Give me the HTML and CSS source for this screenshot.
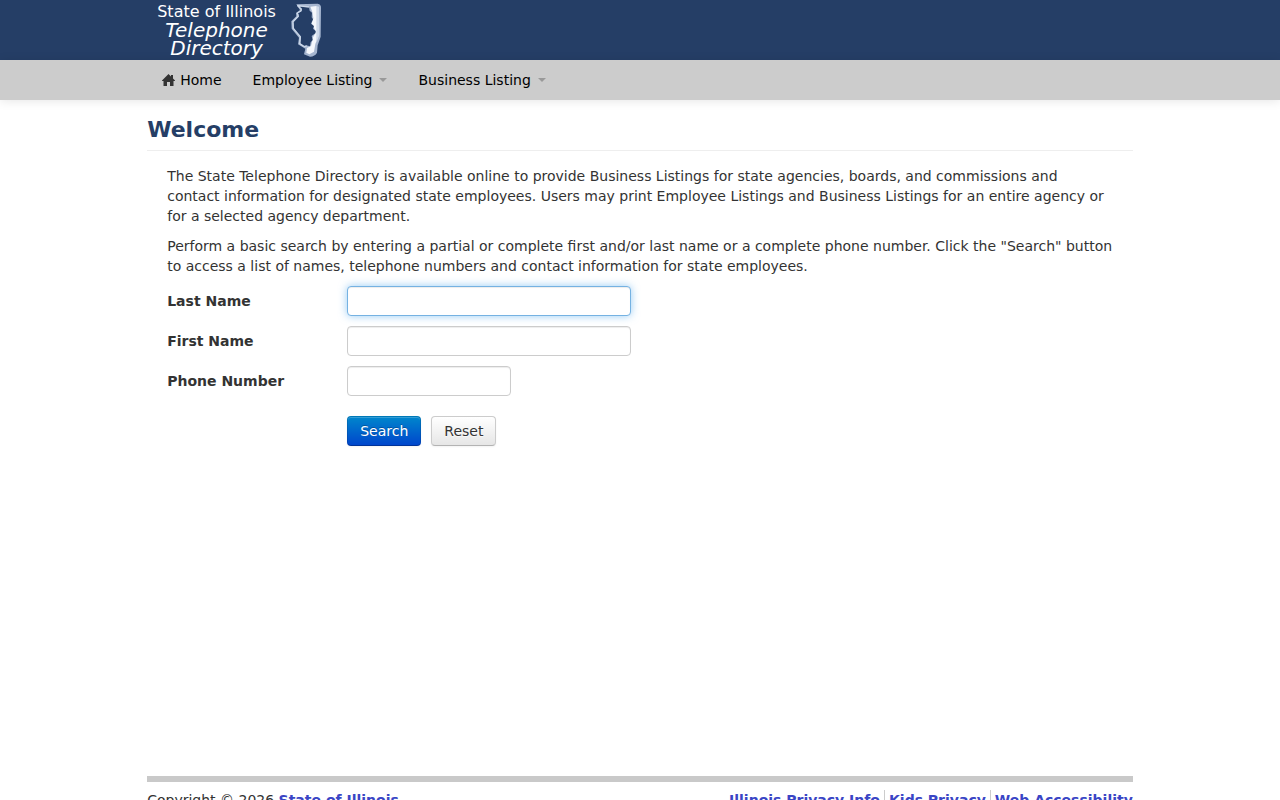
FILE: index.html
```html
<!DOCTYPE html>
<html lang="en">
<head>
<meta charset="utf-8">
<meta name="viewport" content="width=device-width, initial-scale=1">
<title>State of Illinois Telephone Directory</title>
<link rel="stylesheet" href="styles.css">
</head>
<body>
<header class="banner">
  <div class="container">
    <div class="brand">
      <div class="brand-text">
        <span class="brand-state">State of Illinois</span>
        <span class="brand-script">Telephone</span>
        <span class="brand-script">Directory</span>
      </div>
      <svg class="brand-map" viewBox="12 9 102 168" aria-hidden="true">
        <path d="M34 13L98 11Q109 13 108 24L107 110L98 136L96 158Q90 169 75 170L57 163L61 146L39 133L42 113L20 86L19 64L34 49L33 39L45 30Z" fill="#a5b5cf"/>
        <path d="M76 20L94 18Q100 22 99 32L100 108L91 132L87 155L73 163L64 158L66 144L78 138L84 112L93 96L80 70L85 55L82 36Z" fill="#f4f7fc"/>
        <path d="M94 18L102 20L103 105L94 128Z" fill="#cfdaea"/>
        <path d="M38 19L72 21L74 32L81 38L80 52L84 58L78 71L87 78L84 86L92 93L91 100L80 108L83 120L77 127L75 139L63 136L58 141L46 130L48 112L42 106L26 84L25 66L40 51L41 44L38 40L50 32L48 25Z" fill="#253e66"/>
        <path d="M72 21L38 17L49 27L48 33L37 39L40 49L24 65L25 85L46 110L44 131L58 140L65 138" fill="none" stroke="#cbd7e8" stroke-width="4" stroke-linejoin="round"/>
      </svg>
    </div>
  </div>
</header>
<nav class="navbar" aria-label="Main">
  <div class="container">
    <ul class="menu">
      <li><a href="#"><svg class="home-icon" viewBox="0 0 13 12" aria-hidden="true"><path d="M6.500 0L9 2.500V1H11V4.500L13 6.500V7H11.500V12H8V8H5V12H1.500V7H0V6.500Z" fill="#333"/></svg>Home</a></li>
      <li><a href="#">Employee Listing<span class="caret"></span></a></li>
      <li><a href="#">Business Listing<span class="caret"></span></a></li>
    </ul>
  </div>
</nav>
<main class="container">
  <h1 class="title">Welcome</h1>
  <div class="content">
    <p>The State Telephone Directory is available online to provide Business Listings for state agencies, boards, and commissions and contact information for designated state employees. Users may print Employee Listings and Business Listings for an entire agency or for a selected agency department.</p>
    <p>Perform a basic search by entering a partial or complete first and/or last name or a complete phone number. Click the "Search" button to access a list of names, telephone numbers and contact information for state employees.</p>
    <form class="search">
      <div class="row"><label for="last">Last Name</label><input class="field active" id="last" type="text"></div>
      <div class="row"><label for="first">First Name</label><input class="field" id="first" type="text"></div>
      <div class="row"><label for="phone">Phone Number</label><input class="field short" id="phone" type="text"></div>
      <div class="actions"><button class="btn primary" type="submit">Search</button><button class="btn" type="reset">Reset</button></div>
    </form>
  </div>
</main>
<footer class="container">
  <div class="footer">
    <div>Copyright © 2026 <a href="#">State of Illinois</a></div>
    <ul class="links">
      <li><a href="#">Illinois Privacy Info</a></li>
      <li><a href="#">Kids Privacy</a></li>
      <li><a href="#">Web Accessibility</a></li>
    </ul>
  </div>
</footer>
</body>
</html>
```

FILE: styles.css
```css
* {
  box-sizing: border-box;
}

body {
  margin: 0;
  background: #fff;
  color: #333;
  font: 14px/20px "DejaVu Sans", Verdana, sans-serif;
}

.container {
  width: 77%;
  margin: 0 auto;
}

.banner {
  height: 60px;
  background: #253e66;
}

.brand {
  display: flex;
  gap: 13px;
  padding: 3px 10px 0;
  color: #fff;
}

.brand-text {
  display: flex;
  flex-direction: column;
  align-items: center;
}

.brand-state {
  font: 16px/18px "DejaVu Sans", Verdana, sans-serif;
}

.brand-script {
  font: italic 20px/18px "Lucida Handwriting", "DejaVu Sans", sans-serif;
}

.brand-map {
  width: 34px;
  height: 56px;
}

.navbar {
  background: #ccc;
  box-shadow: 0 1px 10px rgba(0, 0, 0, 0.1);
}

.menu,
.links {
  display: flex;
  margin: 0;
  padding: 0;
  list-style: none;
}

.menu {
  gap: 1px;
}

.menu a {
  display: flex;
  align-items: center;
  padding: 10px 15px;
  color: #000;
  text-decoration: none;
}

.home-icon {
  width: 13px;
  height: 12px;
  margin-right: 5px;
}

.caret {
  margin-left: 7px;
  border: 4px solid transparent;
  border-top-color: #999;
  border-bottom: 0;
}

.title {
  margin: 10px 0 15px;
  border-bottom: 1px solid #eee;
  color: #253e66;
  font-size: 22px;
  line-height: 40px;
}

.content {
  padding: 0 20px;
}

.content p {
  margin: 0 0 10px;
}

.search {
  display: grid;
  gap: 10px;
  margin: 0;
}

.row {
  display: flex;
  align-items: center;
}

.row label {
  width: 180px;
  font-weight: bold;
}

.field {
  width: 284px;
  height: 30px;
  padding: 4px 6px;
  border: 1px solid #ccc;
  border-radius: 4px;
  background: #fff;
  box-shadow: inset 0 1px 1px rgba(0, 0, 0, 0.075);
  color: #555;
  font: inherit;
}

.field.short {
  width: 164px;
}

.field.active,
.field:focus {
  border-color: #75b2e2;
  outline: 0;
  box-shadow: inset 0 1px 1px rgba(0, 0, 0, 0.075), 0 0 8px rgba(82, 168, 236, 0.6);
}

.actions {
  display: flex;
  gap: 10px;
  padding: 10px 0 0 180px;
}

.btn {
  padding: 4px 12px;
  border: 1px solid #ccc;
  border-bottom-color: #b3b3b3;
  border-radius: 4px;
  background: linear-gradient(#fff, #e6e6e6);
  box-shadow: inset 0 1px 0 rgba(255, 255, 255, 0.2), 0 1px 2px rgba(0, 0, 0, 0.05);
  color: #333;
  font: inherit;
  text-shadow: 0 1px 1px rgba(255, 255, 255, 0.75);
}

.btn.primary {
  border-color: rgba(0, 0, 0, 0.1) rgba(0, 0, 0, 0.1) rgba(0, 0, 0, 0.25);
  background: linear-gradient(#08c, #04c) border-box;
  color: #fff;
  text-shadow: 0 -1px 0 rgba(0, 0, 0, 0.25);
}

.footer {
  display: flex;
  justify-content: space-between;
  margin-top: 330px;
  padding: 8px 0 20px;
  border-top: 6px solid #c9c9c9;
}

.footer a {
  color: #3a45c5;
  font-weight: bold;
  text-decoration: none;
}

.links li + li {
  margin-left: 4px;
  padding-left: 4px;
  border-left: 1px solid #ccc;
}
```
